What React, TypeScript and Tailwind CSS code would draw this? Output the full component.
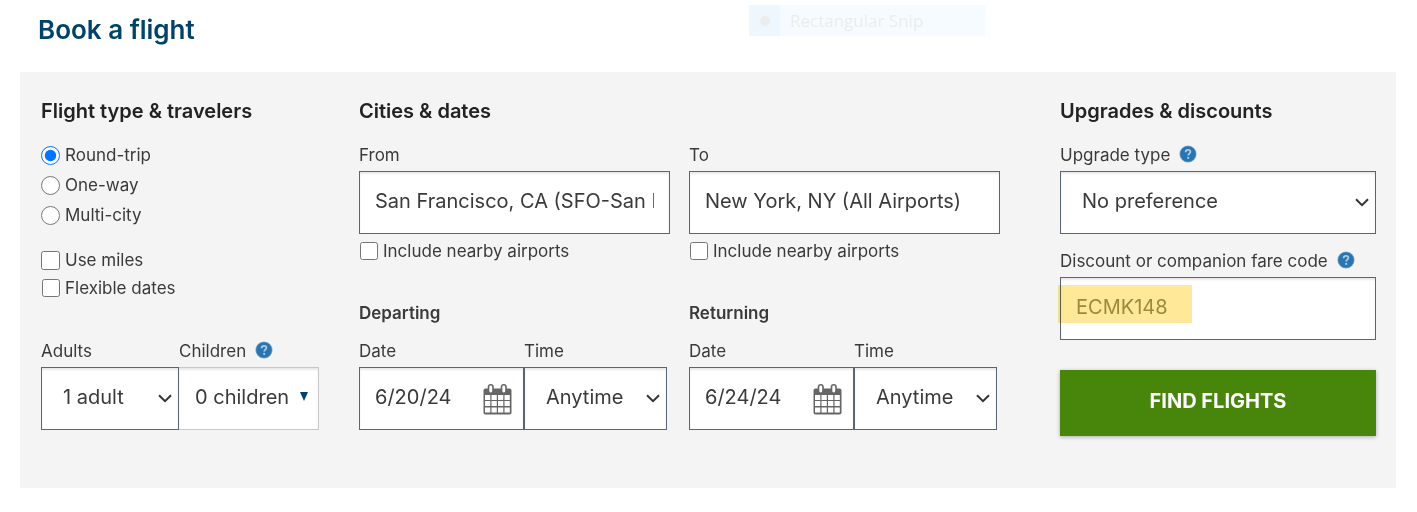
import React, {useState} from "react";
import clsx from "clsx";

type FieldProps = {
    id: string
    label: string
    help?: boolean
    children: React.ReactNode
};

type SelectProps = {
    id: string
    options: string[]
};

type OptionProps = {
    label: string
    small?: boolean
};

type TripProps = {
    id: string
    title: string
    date: string
};

const boxStyle = "block h-[63px] w-full min-w-0 rounded-none border border-[#5b6675] bg-white pb-1 text-xl shadow-[inset_0_2px_2px_#e9e9ec]"

const HelpIcon = () => (
    <svg className="size-[18px]" viewBox="0 0 18 18" aria-hidden="true">
        <circle cx="9" cy="9" r="8.6" fill="#7fabd2" />
        <circle cx="9" cy="9" r="7.8" fill="#2a74b0" />
        <path d="M6.600 7.200C6.600 5.600 7.600 4.800 9 4.800c1.500 0 2.400.8 2.400 2 0 1.700-2.200 1.900-2.200 3.800" fill="none" stroke="#a9cbe6" strokeWidth="1.800" />
        <circle cx="9.200" cy="12.900" r="1.100" fill="#a9cbe6" />
    </svg>
)

const CalendarIcon = () => (
    <svg className="h-[31px] w-[29px]" viewBox="0 0 29 31" aria-hidden="true">
        <rect x="0.500" y="4.500" width="28" height="26" rx="2" fill="#666" />
        <rect x="5.500" y="0.800" width="4.500" height="8.500" rx="2.200" fill="#fff" stroke="#666" strokeWidth="1.600" />
        <rect x="18.500" y="0.800" width="4.500" height="8.500" rx="2.200" fill="#fff" stroke="#666" strokeWidth="1.600" />
        <g fill="#fff">
            {[11, 17, 23.5].map(y =>
                [2, 8.5, 15, 21.5].map(x => (
                    <rect key={`${x}-${y}`} x={x} y={y} width="5.300" height="5" />
                ))
            )}
        </g>
    </svg>
)

const Field = ({id, label, help, children}: FieldProps) => (
    <div className="min-w-0">
        <div className="mb-1 flex h-6 items-center gap-[9px]">
            <label htmlFor={id} className="whitespace-nowrap pt-0.5">{label}</label>
            {help && (
                <button type="button" aria-label={`${label} help`} className="pb-0.5">
                    <HelpIcon />
                </button>
            )}
        </div>
        {children}
    </div>
)

const Select = ({id, options}: SelectProps) => (
    <div className="relative">
        <select id={id} className={clsx(boxStyle, "appearance-none pl-[21px] pr-6 text-[#3a3a3a]")}>
            {options.map(option => <option key={option}>{option}</option>)}
        </select>
        <svg className="pointer-events-none absolute right-[7px] top-[27px] h-[9px] w-[14px]" viewBox="0 0 14 9" aria-hidden="true">
            <path d="M1 1.200 7 7.200 13 1.200" fill="none" stroke="#333" strokeWidth="2" />
        </svg>
    </div>
)

const CheckOption = ({label, small}: OptionProps) => (
    <label className="flex h-6 items-center gap-[5px]">
        <input type="checkbox" className={small ? "ml-px size-[18px]" : "size-[19px]"} />
        <span className="pt-0.5">{label}</span>
    </label>
)

const TripDates = ({id, title, date}: TripProps) => (
    <div>
        <h3 className="mb-[14px] font-semibold leading-6">{title}</h3>
        <div className="grid grid-cols-[165fr_143fr] pr-[3px]">
            <Field id={`${id}-date`} label="Date">
                <div className="relative">
                    <input id={`${id}-date`} defaultValue={date} className={clsx(boxStyle, "pl-[15px] pr-12 text-[#3a3a3a]")} />
                    <button type="button" aria-label={`Choose ${title.toLowerCase()} date`} className="absolute right-3 top-[17px]">
                        <CalendarIcon />
                    </button>
                </div>
            </Field>
            <Field id={`${id}-time`} label="Time">
                <Select id={`${id}-time`} options={["Anytime", "Morning", "Afternoon", "Evening"]} />
            </Field>
        </div>
    </div>
)

const CityField = ({id, label, city}: {id: string, label: string, city: string}) => (
    <div className="min-w-0">
        <Field id={id} label={label}>
            <input id={id} defaultValue={city} className={clsx(boxStyle, "px-[15px] text-[#3a3a3a]")} />
        </Field>
        <div className="mt-[5px]">
            <CheckOption label="Include nearby airports" small />
        </div>
    </div>
)

const App = () => {
    const [trip, setTrip] = useState("Round-trip")

    return (
        <main className="relative bg-white pb-6 pl-5 pr-[21px] font-['Inter',sans-serif] text-[17px] text-[#3a3a3a]">
            {/* Capture mode hint */}
            <div className="absolute left-[749px] top-[5px] flex h-[31px] w-[236px] items-center bg-[#f5fbfe] font-['Open_Sans',sans-serif] text-[17px] text-[#ececec]">
                <div className="flex h-full w-[31px] items-center justify-center bg-[#eff7fe]">
                    <div className="size-[10px] rounded-full bg-[#ececec]" />
                </div>
                <span className="pl-[10px] pt-px">Rectangular Snip</span>
            </div>

            <h1 className="flex h-[72px] items-center pb-[14px] pl-[18px] text-[26px] font-semibold text-[#01426a]">Book a flight</h1>

            <form
                className="grid grid-cols-[278fr_641fr_336fr] gap-x-10 bg-[#f4f4f4] pb-[52px] pl-[21px] pr-5 pt-[25px]"
                onSubmit={e => e.preventDefault()}
            >
                {/* Flight type & travelers */}
                <section>
                    <h2 className="mb-[18px] text-xl font-semibold leading-7 text-[#222]">Flight type &amp; travelers</h2>
                    <div className="flex flex-col gap-[6px]">
                        {["Round-trip", "One-way", "Multi-city"].map(type => (
                            <label key={type} className="flex h-6 items-center gap-[5px]">
                                <input
                                    type="radio"
                                    name="trip"
                                    checked={trip === type}
                                    onChange={() => setTrip(type)}
                                    className="size-[19px]"
                                />
                                <span className="pt-0.5">{type}</span>
                            </label>
                        ))}
                    </div>
                    <div className="mt-[21px] flex flex-col gap-1">
                        <CheckOption label="Use miles" />
                        <CheckOption label="Flexible dates" small />
                    </div>
                    <div className="mt-[39px] grid grid-cols-[138fr_140fr]">
                        <Field id="adults" label="Adults">
                            <Select id="adults" options={["1 adult", "2 adults", "3 adults"]} />
                        </Field>
                        <Field id="children" label="Children" help>
                            <button
                                id="children"
                                type="button"
                                className="flex h-[63px] w-full items-center justify-between whitespace-nowrap border border-l-0 border-[#c8c8c8] bg-white pb-1 pl-4 pr-[10px] text-xl shadow-[inset_0_2px_2px_#e9e9ec]"
                            >
                                0 children
                                <svg className="h-[9px] w-2" viewBox="0 0 8 9" aria-hidden="true">
                                    <path d="M0 0h8L4 9z" fill="#01426a" />
                                </svg>
                            </button>
                        </Field>
                    </div>
                </section>

                {/* Cities & dates */}
                <section className="min-w-0">
                    <h2 className="mb-[18px] text-xl font-semibold leading-7 text-[#222]">Cities &amp; dates</h2>
                    <div className="grid grid-cols-2 gap-x-[19px] gap-y-[38px]">
                        <CityField id="from" label="From" city="San Francisco, CA (SFO-San Francisco Intl.)" />
                        <CityField id="to" label="To" city="New York, NY (All Airports)" />
                        <TripDates id="departing" title="Departing" date="6/20/24" />
                        <TripDates id="returning" title="Returning" date="6/24/24" />
                    </div>
                </section>

                {/* Upgrades & discounts */}
                <section className="min-w-0 pl-5">
                    <h2 className="mb-[18px] text-xl font-semibold leading-7 text-[#222]">Upgrades &amp; discounts</h2>
                    <Field id="upgrade" label="Upgrade type" help>
                        <Select id="upgrade" options={["No preference", "First class", "Premium class"]} />
                    </Field>
                    <div className="mt-[15px]">
                        <Field id="code" label="Discount or companion fare code" help>
                            <div className="relative">
                                <input id="code" defaultValue="ECMK148" className={clsx(boxStyle, "px-[15px] text-[#9c9660]")} />
                                <div className="pointer-events-none absolute -left-[2px] top-2 h-[38px] w-[134px] bg-[#ffe998] mix-blend-multiply" />
                            </div>
                        </Field>
                    </div>
                    <button type="submit" className="mt-[30px] h-[66px] w-full bg-[#47850b] pb-1 text-xl font-bold text-white shadow-[0_1px_4px_#0000004d]">
                        FIND FLIGHTS
                    </button>
                </section>
            </form>
        </main>
    );
};

export default App;
